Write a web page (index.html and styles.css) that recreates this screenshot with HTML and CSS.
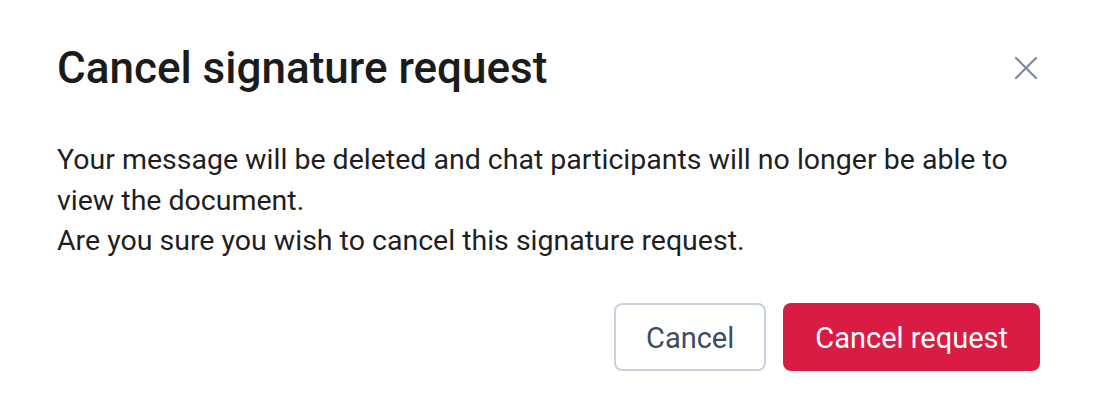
FILE: index.html
```html
<!DOCTYPE html>
<html lang="en">
<head>
  <meta charset="UTF-8">
  <meta name="viewport" content="width=device-width, initial-scale=1.0">
  <title>Cancel signature request</title>
  <link rel="stylesheet" href="styles.css">
</head>
<body>
<div class="modal">
  <div class="modal-header">
    <h2 class="modal-title">Cancel signature request</h2>
    <button type="button" class="close-btn" aria-label="Close">
      <svg width="24" height="24" viewBox="0 0 24 24" fill="none" stroke="currentColor" stroke-width="2.2" stroke-linecap="round">
        <path d="M2 2 L22 22 M22 2 L2 22"/>
      </svg>
    </button>
  </div>
  <p class="modal-text">
    Your message will be deleted and chat participants will no longer be able to view the document.<br>
    Are you sure you wish to cancel this signature request.
  </p>
  <div class="modal-actions">
    <button type="button" class="btn btn-outline">Cancel</button>
    <button type="button" class="btn btn-danger">Cancel request</button>
  </div>
</div>
</body>
</html>
```

FILE: styles.css
```css
body {
  margin: 0;
  font-family: Roboto, "Liberation Sans", sans-serif;
  background: #fff;
  color: #1f1f1f;
}

.modal {
  padding: 42px 54px 36px 57px;
}

.modal-header {
  display: flex;
  align-items: center;
  justify-content: space-between;
}

.modal-title {
  margin: 0;
  font-size: 44px;
  font-weight: 500;
  line-height: 52px;
  color: #1b1b1b;
}

.close-btn {
  background: none;
  border: none;
  padding: 0;
  margin-right: 2px;
  color: #7d8a9c;
  display: flex;
  cursor: pointer;
}

.modal-text {
  margin: 46px 0 0;
  font-size: 28.5px;
  line-height: 40.5px;
  color: #1f1f1f;
}

.modal-actions {
  display: flex;
  justify-content: flex-end;
  gap: 17px;
  margin-top: 41px;
}

.btn {
  height: 68px;
  padding: 2px 30px 0;
  border-radius: 8px;
  font-family: inherit;
  font-size: 29px;
  cursor: pointer;
}

.btn-outline {
  background: #fff;
  border: 2px solid #c7d2de;
  color: #3e4c5e;
}

.btn-danger {
  padding: 2px 32px 0;
  background: #da1b43;
  border: none;
  color: #fff;
}
```
